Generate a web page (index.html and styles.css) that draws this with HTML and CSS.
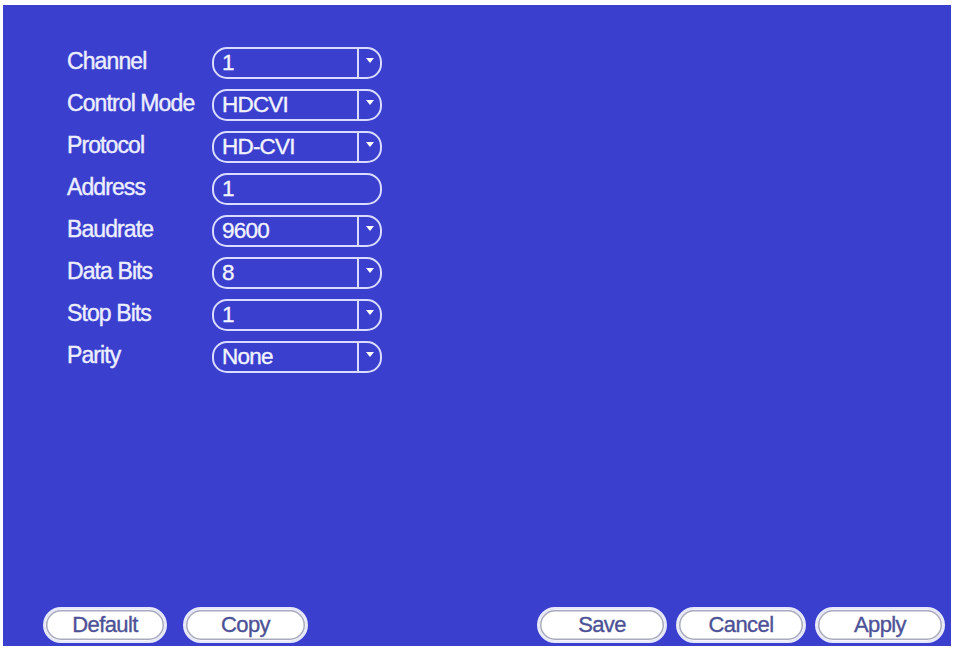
FILE: index.html
```html
<!DOCTYPE html>
<html>
<head>
<meta charset="utf-8">
<link rel="stylesheet" href="styles.css">
</head>
<body>
<div class="panel">
  <div class="form">
    <div class="row"><span class="label">Channel</span><div class="field select"><span class="val">1</span><span class="drop"><span class="tri"></span></span></div></div>
    <div class="row"><span class="label">Control Mode</span><div class="field select"><span class="val">HDCVI</span><span class="drop"><span class="tri"></span></span></div></div>
    <div class="row"><span class="label">Protocol</span><div class="field select"><span class="val">HD-CVI</span><span class="drop"><span class="tri"></span></span></div></div>
    <div class="row"><span class="label">Address</span><div class="field"><span class="val">1</span></div></div>
    <div class="row"><span class="label">Baudrate</span><div class="field select"><span class="val">9600</span><span class="drop"><span class="tri"></span></span></div></div>
    <div class="row"><span class="label">Data Bits</span><div class="field select"><span class="val">8</span><span class="drop"><span class="tri"></span></span></div></div>
    <div class="row"><span class="label">Stop Bits</span><div class="field select"><span class="val">1</span><span class="drop"><span class="tri"></span></span></div></div>
    <div class="row"><span class="label">Parity</span><div class="field select"><span class="val">None</span><span class="drop"><span class="tri"></span></span></div></div>
  </div>
  <div class="actions">
    <div class="group left">
      <button class="btn w124">Default</button>
      <button class="btn w125">Copy</button>
    </div>
    <div class="group right">
      <button class="btn">Save</button>
      <button class="btn">Cancel</button>
      <button class="btn">Apply</button>
    </div>
  </div>
</div>
</body>
</html>
```
FILE: styles.css
```css
html, body {
  margin: 0;
  padding: 0;
  background: #ffffff;
}
body {
  width: 953px;
  height: 648px;
  overflow: hidden;
  font-family: "Liberation Sans", Arial, sans-serif;
}
.panel {
  margin: 5px 2px 0 3px;
  height: 641px;
  background: #3a3fce;
  box-sizing: border-box;
  padding: 42px 6px 3px 0;
  display: flex;
  flex-direction: column;
  justify-content: space-between;
}
.form {
  display: flex;
  flex-direction: column;
  gap: 10px;
}
.row {
  display: flex;
  align-items: center;
  height: 32px;
}
.label {
  width: 145px;
  padding-left: 64px;
  color: #eceeff;
  font-size: 23px;
  letter-spacing: -0.9px;
  -webkit-text-stroke: 0.4px #eceeff;
  white-space: nowrap;
  margin-top: -4px;
}
.field {
  width: 170px;
  height: 32px;
  box-sizing: border-box;
  border: 2px solid #d9dcff;
  border-radius: 15px;
  display: flex;
  align-items: stretch;
  color: #f2f3ff;
}
.val {
  flex: 1;
  padding-left: 8px;
  font-size: 22.5px;
  line-height: 28px;
  letter-spacing: -0.8px;
  -webkit-text-stroke: 0.35px #f2f3ff;
}
.drop {
  width: 23px;
  border-left: 2px solid #d9dcff;
  display: flex;
  justify-content: center;
  padding-top: 9px;
  box-sizing: border-box;
}
.tri {
  width: 0;
  height: 0;
  border-left: 4px solid transparent;
  border-right: 4px solid transparent;
  border-top: 5px solid #ffffff;
}
.actions {
  display: flex;
  justify-content: space-between;
  align-items: center;
}
.group {
  display: flex;
}
.group.left {
  padding-left: 40px;
  gap: 16px;
}
.group.right {
  gap: 9px;
}
.btn {
  width: 130px;
  height: 36px;
  box-sizing: border-box;
  border-radius: 18px;
  background: #ffffff;
  border: 2px solid #e6e8fb;
  box-shadow: inset 0 0 0 1px #f4f4fa, inset 0 0 0 2.5px #a8aabd, inset 0 0 0 4px #ffffff;
  color: #4d5196;
  font-family: "Liberation Sans", Arial, sans-serif;
  font-size: 22px;
  letter-spacing: -0.6px;
  padding: 0;
  line-height: 30px;
  -webkit-text-stroke: 0.35px #4d5196;
}
.btn.w124 { width: 124px; }
.btn.w125 { width: 125px; }
```
